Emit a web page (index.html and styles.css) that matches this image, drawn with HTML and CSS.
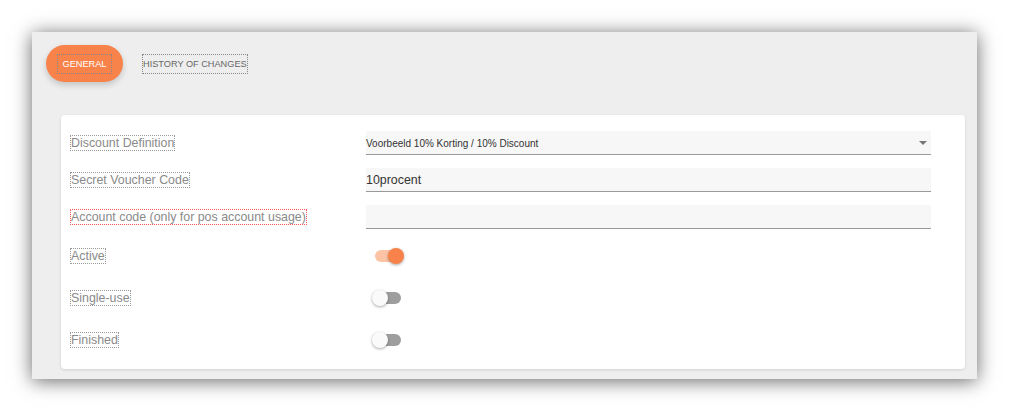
FILE: index.html
```html
<!DOCTYPE html>
<html>
  <head>
    <meta charset="utf-8" />
    <title>Voucher</title>
    <link rel="stylesheet" href="styles.css">
  </head>

  <body>
    <div class="panel">
      <!-- tabs -->
      <div class="tabs">
        <a class="tab tab-active"><span class="tab-txt">GENERAL</span></a>
        <a class="tab"><span class="tab-txt">HISTORY OF CHANGES</span></a>
      </div>

      <!-- form card -->
      <div class="card">
        <div class="row">
          <label class="lbl"><span>Discount Definition</span></label>
          <div class="field select">
            <span class="val small">Voorbeeld 10% Korting / 10% Discount</span>
            <span class="caret"></span>
          </div>
        </div>
        <div class="row">
          <label class="lbl"><span>Secret Voucher Code</span></label>
          <div class="field"><span class="val">10procent</span></div>
        </div>
        <div class="row">
          <label class="lbl"><span class="req">Account code (only for pos account usage)</span></label>
          <div class="field"></div>
        </div>

        <div class="row row-tg">
          <label class="lbl"><span>Active</span></label>
          <span class="toggle on"><i></i></span>
        </div>
        <div class="row row-tg">
          <label class="lbl"><span>Single-use</span></label>
          <span class="toggle"><i></i></span>
        </div>
        <div class="row row-tg">
          <label class="lbl"><span>Finished</span></label>
          <span class="toggle"><i></i></span>
        </div>
      </div>
    </div>
  </body>
</html>
```

FILE: styles.css
```css
body {
  margin: 0;
  padding: 32px;
  background: #fff;
  font-family: "Liberation Sans", Arial, sans-serif;
}

/* grey outer panel */
.panel {
  width: 945px;
  height: 347px;
  box-sizing: border-box;
  padding: 13px 0 0 14px;
  background: #eeeeee;
  box-shadow: 0 2px 18px rgba(0, 0, 0, 0.6);
}

/* tabs */
.tabs {
  display: flex;
  align-items: center;
  gap: 19px;
  height: 37px;
}
.tab {
  display: flex;
  align-items: center;
  justify-content: center;
  height: 37px;
  font-size: 9.2px;
  color: #666;
}
.tab-active {
  width: 77px;
  border-radius: 19px;
  background: #f8834a;
  color: #fff;
  box-shadow: 0 3px 6px rgba(0, 0, 0, 0.18);
}
.tab-txt {
  display: block;
  line-height: 18px;
  border: 1px dotted #888;
}
.tab-active .tab-txt {
  padding: 0 5px;
}

/* white card */
.card {
  width: 904px;
  height: 254px;
  box-sizing: border-box;
  margin: 33px 0 0 15px;
  padding: 16px 34px 7px 9px;
  background: #fff;
  border-radius: 4px;
  box-shadow: 0 1px 3px rgba(0, 0, 0, 0.12);
}

.row {
  display: flex;
  align-items: center;
  height: 24px;
  margin-bottom: 13px;
}
.row-tg {
  height: 42px;
  margin-bottom: 0;
}
.row:nth-child(4) {
  margin-top: -7px;
}

.lbl {
  width: 296px;
  flex: none;
  font-size: 12.4px;
  color: #8a8a8a;
}
.lbl span {
  border: 1px dotted #999;
  line-height: 12px;
}
.lbl .req {
  border-color: #f55;
}

/* inputs */
.field {
  position: relative;
  flex: 1;
  height: 24px;
  display: flex;
  align-items: center;
  background: #f7f7f7;
  border-bottom: 1px solid #999;
  box-sizing: border-box;
}
.val {
  font-size: 12.4px;
  color: #333;
}
.val.small {
  font-size: 10px;
  padding-top: 2px;
}
.caret {
  position: absolute;
  right: 4px;
  top: 10px;
  border-left: 4px solid transparent;
  border-right: 4px solid transparent;
  border-top: 4px solid #777;
}

/* toggles */
.toggle {
  position: relative;
  display: block;
  width: 26px;
  height: 12px;
  margin-left: 9px;
  border-radius: 6px;
  background: #9e9e9e;
}
.toggle i {
  position: absolute;
  top: -2px;
  left: -3px;
  width: 16px;
  height: 16px;
  border-radius: 50%;
  background: #fafafa;
  box-shadow: 0 1px 3px rgba(0, 0, 0, 0.35);
}
.toggle.on {
  background: #fcc4a5;
}
.toggle.on i {
  left: 13px;
  background: #f8834a;
}
```
